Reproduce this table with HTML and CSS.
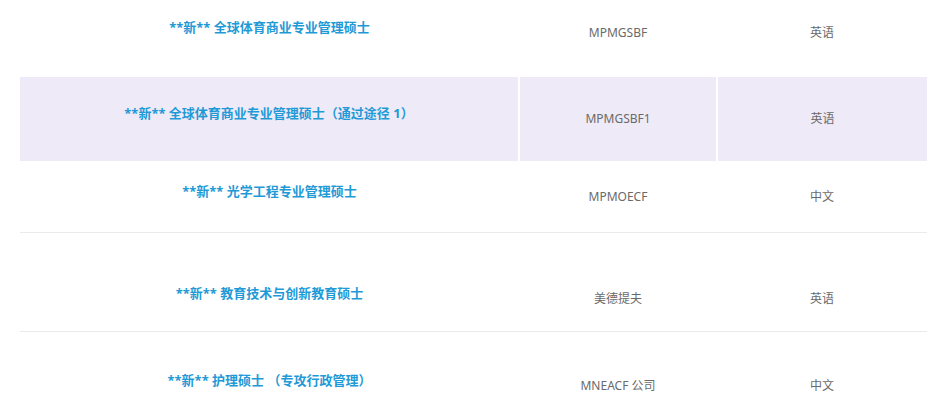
FILE: index.html
```html
<!DOCTYPE html>
<html lang="zh-CN">
<head>
  <meta charset="UTF-8" />
  <meta name="viewport" content="width=device-width, initial-scale=1.0"/>
  <title>课程列表</title>
  <link rel="stylesheet" href="styles.css">
</head>
<body>
  <table class="programs">
    <colgroup>
      <col class="col-name">
      <col class="col-code">
      <col class="col-lang">
    </colgroup>
    <tr class="row-1">
      <td class="name"><span>**新** 全球体育商业专业管理硕士</span></td>
      <td>MPMGSBF</td>
      <td>英语</td>
    </tr>
    <tr class="row-2 highlight">
      <td class="name"><span>**新** 全球体育商业专业管理硕士（通过途径 1）</span></td>
      <td>MPMGSBF1</td>
      <td>英语</td>
    </tr>
    <tr class="row-3 lined">
      <td class="name"><span>**新** 光学工程专业管理硕士</span></td>
      <td>MPMOECF</td>
      <td>中文</td>
    </tr>
    <tr class="row-4 lined">
      <td class="name"><span>**新** 教育技术与创新教育硕士</span></td>
      <td>美德提夫</td>
      <td>英语</td>
    </tr>
    <tr class="row-5">
      <td class="name"><span>**新** 护理硕士 （专攻行政管理）</span></td>
      <td>MNEACF 公司</td>
      <td>中文</td>
    </tr>
  </table>
</body>
</html>
```

FILE: styles.css
```css
body { margin: 0; font-family: "Noto Sans", "Noto Sans CJK SC", sans-serif; font-size: 12px; background-color: #ffffff; color: #6a6a6a; overflow: hidden; }
.programs { margin-left: 20px; width: 907px; border-collapse: collapse; table-layout: fixed; }
.col-name { width: 499px; }
.col-code { width: 198px; }
.col-lang { width: 210px; }
.programs td { padding: 0; text-align: center; vertical-align: top; line-height: 20px; }
.programs td.name span { display: block; margin-top: -6px; font-size: 13px; font-weight: bold; color: #1f9ad6; }
.row-1 td { height: 54px; padding-top: 23px; }
.row-2 td { height: 52px; padding-top: 32px; }
.row-3 td { height: 45px; padding-top: 26px; }
.row-4 td { height: 42px; padding-top: 56px; }
.row-5 td { height: 38px; padding-top: 44px; }
.highlight td { background-color: #efeaf7; }
.highlight td + td { border-left: 2px solid #ffffff; }
.lined td { border-bottom: 1px solid #e9e9ee; }
```
